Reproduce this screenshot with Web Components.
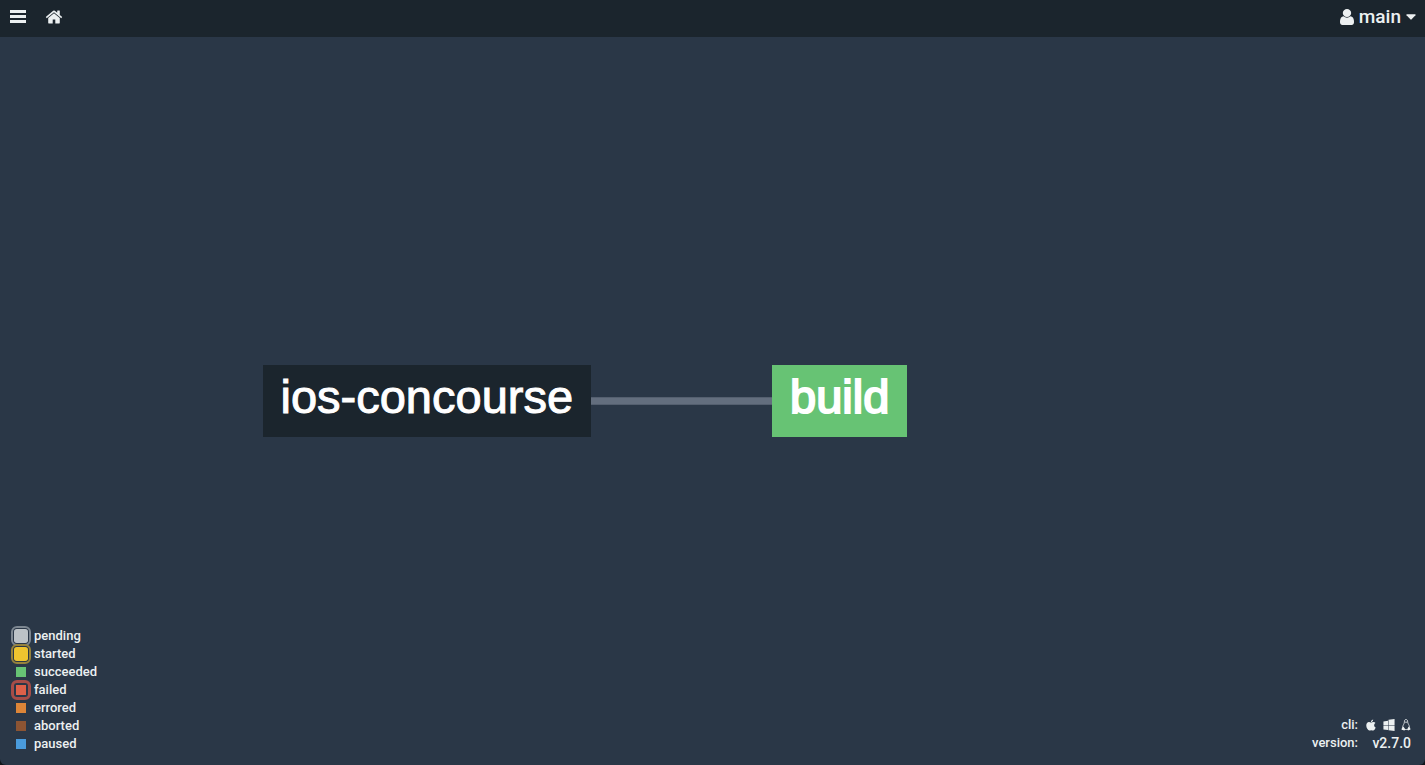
<!DOCTYPE html>
<html lang="en">
<head>
<meta charset="utf-8">
<title>ios-concourse - Concourse</title>
<style>
html{height:100%;background:#10161b}
body{margin:0;height:100%;font:500 13px/18px Roboto,"Liberation Sans",sans-serif;color:#ecf0f1}
</style>
</head>
<body>
<pipeline-app></pipeline-app>
<script>
const define = (name, html) => {
  const template = document.createElement('template');
  template.innerHTML = html;
  customElements.define(name, class extends HTMLElement {
    constructor() {
      super();
      this.attachShadow({mode: 'open'}).append(template.content.cloneNode(true));
    }
  });
};

define('top-bar', `
<style>
:host{display:flex;align-items:center;justify-content:space-between;height:37px;background:#1b252d}
nav{display:flex}
a,button{display:flex;align-items:center;height:34px;margin:0;padding:0 9px;border:0;background:none;color:inherit;font:500 19px/24px Roboto,"Liberation Sans",sans-serif}
nav,.user{align-self:flex-start}
.user{gap:5px}
svg{display:block;fill:currentColor}
</style>
<nav aria-label="Main">
<button aria-label="Toggle pipelines"><svg width="18" height="18" viewBox="0 0 18 18"><path d="M1 2h16v3H1zM1 7h16v3H1zM1 12h16v3H1z"/></svg></button>
<a href="#home" aria-label="Home"><svg width="18" height="18" viewBox="0 0 1792 1792"><path d="M1472 992v480q0 26-19 45t-45 19h-384v-384h-256v384h-384q-26 0-45-19t-19-45v-480q0-1 .5-3t.5-3l575-474 575 474q1 2 1 6zm223-69l-62 74q-8 9-21 11h-3q-13 0-21-7l-692-577-692 577q-12 8-24 7-13-2-21-11l-62-74q-8-10-7-23.5t11-21.5l719-599q32-26 76-26t76 26l244 204v-195q0-14 9-23t23-9h192q14 0 23 9t9 23v408l219 182q10 8 11 21.5t-7 23.5z"/></svg></a>
</nav>
<button class="user"><svg width="14" height="16" viewBox="256 128 1280 1536" preserveAspectRatio="none"><path d="M1536 1399q0 109-62.500 187t-150.500 78h-854q-88 0-150.500-78t-62.500-187q0-85 8.500-160.500t31.500-152 58.500-131 94-89 134.500-34.500q131 128 313 128t313-128q76 0 134.500 34.500t94 89 58.500 131 31.500 152 8.500 160.500zm-256-887q0 159-112.500 271.500t-271.500 112.500-271.500-112.500-112.500-271.500 112.500-271.500 271.500-112.500 271.500 112.500 112.500 271.500z"/></svg><span>main</span><svg width="10" height="6" viewBox="0 0 11 6"><path d="M1 0h9q1 0 .4 1L6.200 5.600q-.7.600-1.400 0L.6 1Q0 0 1 0z"/></svg></button>`);

define('graph-node', `
<style>
:host{display:block;background:#1b252d}
a{display:block;padding:6px 18px 14px;color:#fff;text-decoration:none;font:400 47px/52px "Liberation Sans",Arial,sans-serif;-webkit-text-stroke:1px #fff}
:host([status=succeeded]){background:#67c374}
:host([status=succeeded]) a{-webkit-text-stroke-width:2px}
</style>
<a href="#node"><slot></slot></a>`);

define('graph-edge', `
<style>
:host{display:block;box-sizing:border-box;width:181px;height:8px;background:#636e7e;border:solid #545f6f;border-width:1px 0}
</style>`);

define('legend-item', `
<style>
:host{display:flex;align-items:center;gap:8px;height:18px}
i{position:relative;width:10px;height:10px;background:var(--c)}
:host([ring]) i::after{content:"";position:absolute;box-sizing:border-box;inset:-5px;border:2px solid var(--r);border-radius:6px}
:host([ring=running]) i{box-shadow:0 0 0 2px var(--c);border-radius:1px}
:host([ring=failed]) i::after{border-width:3px}
</style>
<i></i><span><slot></slot></span>`);

define('status-legend', `
<style>
:host{display:block}
legend-item{width:max-content}
</style>
<legend-item ring="running" style="--c:#bdc3c7;--r:#7d8791">pending</legend-item>
<legend-item ring="running" style="--c:#efc42f;--r:#96823c">started</legend-item>
<legend-item style="--c:#67c374">succeeded</legend-item>
<legend-item ring="failed" style="--c:#dd6049;--r:#a64d48">failed</legend-item>
<legend-item style="--c:#dc8538">errored</legend-item>
<legend-item style="--c:#8c5433">aborted</legend-item>
<legend-item style="--c:#4a9bdc">paused</legend-item>`);

define('cli-info', `
<style>
:host{display:block}
dl{display:grid;grid-template-columns:max-content 45px;column-gap:8px;margin:0;text-align:right}
dd{margin:0;font-size:14px}
.cli{display:flex;align-items:center;justify-content:space-between}
a{color:inherit}
svg{display:block;fill:currentColor}
</style>
<dl>
<dt>cli:</dt>
<dd class="cli">
<a href="#darwin" aria-label="macOS CLI"><svg width="10" height="12" viewBox="150 0 1480 1664"><path d="M1585 1215q-39 125-123 250-129 196-257 196-49 0-140-32-86-32-151-32-61 0-142 33-81 34-132 34-152 0-301-259-147-261-147-503 0-228 113-374 113-144 284-144 72 0 177 30 104 30 138 30 45 0 143-34 102-34 173-34 119 0 213 65 52 36 104 100-79 67-114 118-65 94-65 207 0 124 69 223t158 126zm-376-1173q0 61-29 136-30 75-93 138-54 54-108 72-37 11-104 17 3-149 78-257 74-107 250-148 1 3 2.500 11t2.500 11q0 4 .5 10t.5 10z"/></svg></a>
<a href="#windows" aria-label="Windows CLI"><svg width="12" height="12" viewBox="0 0 1792 1792"><path d="M746 1006v651l-682-94v-557h682zm0-743v659h-682v-565zm982 743v786l-907-125v-661h907zm0-1006v922h-907v-797z"/></svg></a>
<a href="#linux" aria-label="Linux CLI"><svg width="10" height="12" viewBox="0 0 20 24"><path d="M10 1C7.500 1 6.500 3 6.800 6c.2 3-3.300 6.500-3.600 10.500M10 1c2.500 0 3.500 2 3.300 5 0 3 3.600 6 3.600 10.500" fill="none" stroke="currentColor" stroke-width="1.600"/><path d="M8 6l2-1 2.300 1-2.300 2zM2 17l3-1.500 3.500 5L7 23l-6-1.500zM18 17l-3-1.500-2.500 5L14 23l5-2zM7 20.500h6V22H7z"/></svg></a>
</dd>
<dt>version:</dt><dd>v2.7.0</dd>
</dl>`);

define('pipeline-app', `
<style>
:host{display:grid;grid-template-rows:auto 1fr;min-height:100%;background:#2a3747;border-radius:0 0 6px 6px;overflow:hidden}
main{display:grid;grid-template-columns:1fr auto}
.graph{grid-area:1/1/2/3;display:flex;align-items:center;padding-left:calc(18% + 6px)}
status-legend,cli-info{grid-row:1;align-self:end;justify-self:start;z-index:1}
status-legend{grid-column:1;padding:0 0 12px 16px}
cli-info{grid-column:2;padding:0 14px 13px 0}
</style>
<top-bar></top-bar>
<main>
<section class="graph" aria-label="Pipeline">
<graph-node>ios-concourse</graph-node><graph-edge></graph-edge><graph-node status="succeeded">build</graph-node>
</section>
<status-legend></status-legend>
<cli-info></cli-info>
</main>`);
</script>
</body>
</html>
